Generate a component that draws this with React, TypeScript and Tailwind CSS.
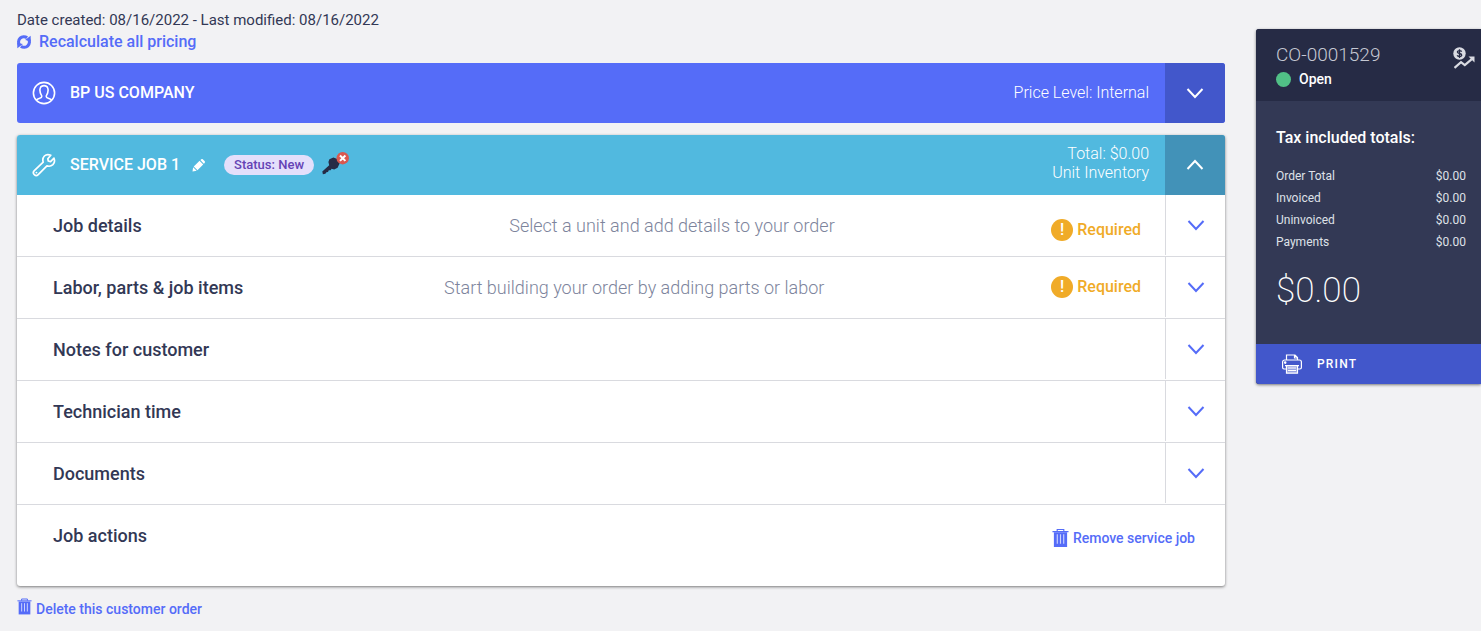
import React from "react";

type IconProps = { className?: string };

function RefreshIcon({ className }: IconProps) {
  return (
    <svg viewBox="0 0 16 16" className={className} fill="none" aria-hidden="true">
      <path d="M3 11.500A6 6 0 0 1 11.500 3.200" stroke="currentColor" strokeWidth="3.600" />
      <path d="M13 4.500A6 6 0 0 1 4.500 12.800" stroke="currentColor" strokeWidth="3.600" />
      <path d="M9.200 5.600 15.800 7 15.600.8Z" fill="currentColor" />
      <path d="M6.800 10.400.2 9 .4 15.200Z" fill="currentColor" />
    </svg>
  );
}

function UserIcon({ className }: IconProps) {
  return (
    <svg viewBox="0 0 24 24" className={className} fill="none" stroke="currentColor" strokeWidth="1.600" aria-hidden="true">
      <circle cx="12" cy="12" r="10.600" />
      <path d="M4.200 19.200c.7-1 2-1.600 3.600-2 1.400-.3 2-.8 2-1.900 0-1.200-1.100-2-1.500-3.600-.5-1.800-.7-3.400 0-4.900C8.900 5.300 10.200 4.600 12 4.600s3.100.7 3.700 2.200c.7 1.500.5 3.100 0 4.900-.4 1.600-1.500 2.400-1.500 3.600 0 1.100.6 1.600 2 1.900 1.600.4 2.900 1 3.600 2" />
    </svg>
  );
}

function WrenchIcon({ className }: IconProps) {
  return (
    <svg viewBox="0 0 24 24" className={className} fill="none" stroke="currentColor" strokeWidth="1.700" strokeLinejoin="round" strokeLinecap="round" aria-hidden="true">
      <path d="M18.800 2.200 15.800 5.800l.5 2.200 2.300.6L22 5.200c.9 2.400.4 5-1.100 6.500-1.600 1.500-3.800 1.900-6 1.200L6.200 21.600c-1.100 1.100-2.800 1.100-3.900 0s-1.100-2.800 0-3.900l8.900-8.500c-.7-2.300-.3-4.600 1.200-6.200 1.600-1.600 4-1.800 6.400-.8Z" />
      <path d="M4.400 19.600h.1" strokeWidth="1.800" />
    </svg>
  );
}

function PencilIcon({ className }: IconProps) {
  return (
    <svg viewBox="0 0 16 16" className={className} fill="currentColor" aria-hidden="true">
      <path d="M.6 15.400l.8-5.200 4.400 4.400Z" />
      <path d="M2.200 9.300 9.300 2.200l4.500 4.500-7.100 7.100Z" />
      <path d="M10.300 1.300 11.200.5c.7-.6 1.600-.6 2.300 0l2 2c.6.7.6 1.600 0 2.300l-.9.900Z" />
    </svg>
  );
}

function KeyMissingIcon({ className }: IconProps) {
  return (
    <svg viewBox="0 0 27 23" className={className} aria-label="Key not assigned" role="img">
      <path d="M6.400 10 7.400 7.200 11.400 5.600 16 7.200 17.600 11.600 15.600 15.800 12.200 17.600 9.600 16.800 8.600 18.200 6.800 18.200 6 20 4.400 20.200 3.400 21.800.9 22.200.3 19.600 7.200 13.200Z" fill="#262b45" />
      <circle cx="20.700" cy="6.200" r="6.200" fill="#d9584f" />
      <path d="M18 3.500l5.400 5.400M23.400 3.500l-5.400 5.400" stroke="#fff" strokeWidth="2" />
    </svg>
  );
}

function Chevron({ up = false, className }: IconProps & { up?: boolean }) {
  return (
    <svg viewBox="0 0 18 12" className={className} fill="none" stroke="currentColor" strokeWidth="2" aria-hidden="true">
      <path d={up ? "M1.500 10 9 2l7.500 8" : "M1.500 2 9 10l7.500-8"} />
    </svg>
  );
}

function TrashIcon({ className }: IconProps) {
  return (
    <svg viewBox="0 0 18 20" className={className} fill="none" aria-hidden="true">
      <path d="M.5 3.200h17" stroke="currentColor" strokeWidth="1.200" />
      <path d="M5.500 3V1h7v2" stroke="currentColor" strokeWidth="1.200" />
      <path d="M2 4h14v15.500H2Z" fill="currentColor" />
      <path d="M5.600 6v10M9 6v10M12.400 6v10" stroke="#fff" strokeOpacity=".7" strokeWidth="1.200" />
    </svg>
  );
}

function PrinterIcon({ className }: IconProps) {
  return (
    <svg viewBox="0 0 20 20" className={className} fill="none" stroke="currentColor" strokeWidth="1.200" aria-hidden="true">
      <path d="M4.500 6V1h8.500l2.500 2.500V6M12.500 1v3h3" />
      <path d="M4 15H2a1.400 1.400 0 0 1-1.400-1.400V8A2 2 0 0 1 2.600 6h14.800a2 2 0 0 1 2 2v5.600A1.400 1.400 0 0 1 18 15h-2" />
      <path d="M4.500 11.500h11v7.700h-11Z" fill="currentColor" fillOpacity=".45" />
      <path d="M3 11.600h14M6 14h8M6 16.500h8" />
      <circle cx="3.200" cy="8.600" r=".7" fill="currentColor" />
    </svg>
  );
}

function ProfitIcon({ className }: IconProps) {
  return (
    <svg viewBox="0 0 22 22" className={className} aria-hidden="true">
      <circle cx="6.500" cy="6.500" r="6.200" fill="#d9dbe2" />
      <path
        d="M8.700 4.600C8.200 3.900 7.400 3.700 6.500 3.700c-1.200 0-2.100.5-2.100 1.400 0 1.900 4.300.9 4.300 2.900 0 1-1 1.500-2.200 1.500-1 0-1.900-.3-2.400-1.100M6.500 2.200v8.800"
        fill="none"
        stroke="#262b45"
        strokeWidth="1.300"
      />
      <path d="M1.500 20.800 8 15.200l3.800 3 7-6" fill="none" stroke="#d9dbe2" strokeWidth="2.200" />
      <path d="M15.500 9.500h6v6Z" fill="#d9dbe2" />
    </svg>
  );
}

type Row = { title: string; hint?: string; hintClass?: string; requiredClass?: string };

const rows: Row[] = [
  { title: "Job details", hint: "Select a unit and add details to your order", hintClass: "pl-[151px]", requiredClass: "pt-2" },
  { title: "Labor, parts & job items", hint: "Start building your order by adding parts or labor", hintClass: "pr-[26px]", requiredClass: "pb-px" },
  { title: "Notes for customer" },
  { title: "Technician time" },
  { title: "Documents" },
];

const totals = [
  ["Order Total", "$0.00"],
  ["Invoiced", "$0.00"],
  ["Uninvoiced", "$0.00"],
  ["Payments", "$0.00"],
];

export default function App() {
  return (
    <div className="flex min-h-screen items-start gap-[31px] bg-[#f2f2f4] pl-[17px] font-['Roboto',sans-serif] text-[#323855]">
      <main className="min-w-0 flex-1 pt-[9px]">
        <p className="text-[15px] leading-[22px]">Date created: 08/16/2022 - Last modified: 08/16/2022</p>
        <button type="button" className="flex items-center gap-2 text-base leading-[22px] font-medium text-[#556cf8]">
          <RefreshIcon className="size-[14px]" />
          Recalculate all pricing
        </button>

        <section className="mt-[10px] flex h-[60px] overflow-hidden rounded-[3px] bg-[#556cf8] text-white">
          <div className="flex flex-1 items-center pr-4 pl-[15px]">
            <UserIcon className="size-6" />
            <h2 className="ml-[14px] text-base font-medium">BP US COMPANY</h2>
            <span className="ml-auto text-base font-light">Price Level: Internal</span>
          </div>
          <button type="button" aria-label="Expand company" className="flex w-[60px] items-center justify-center bg-[#4257cb]">
            <Chevron className="h-3 w-[18px]" />
          </button>
        </section>

        <section className="mt-3 overflow-hidden rounded-[3px] bg-white shadow-[0_1px_3px_rgba(0,0,0,0.5)]">
          <div className="flex h-[60px] bg-[#51b9df] text-white">
            <div className="flex flex-1 items-center pr-4 pl-[15px]">
              <WrenchIcon className="size-6" />
              <h2 className="ml-[14px] text-base font-medium">SERVICE JOB 1</h2>
              <button type="button" aria-label="Rename job" className="ml-3">
                <PencilIcon className="size-[13px]" />
              </button>
              <span className="ml-[19px] flex h-5 w-[90px] items-center justify-center rounded-full bg-[#e4dffb] text-[13px] font-medium text-[#6543b5]">
                Status: New
              </span>
              <KeyMissingIcon className="mb-1 ml-2 h-[23px] w-[27px]" />
              <div className="ml-auto pb-1 text-right text-base leading-[19px] font-light">
                <div>Total: $0.00</div>
                <div>Unit Inventory</div>
              </div>
            </div>
            <button type="button" aria-label="Collapse service job" className="flex w-[60px] items-center justify-center bg-[#4292b8]">
              <Chevron up className="h-3 w-[18px]" />
            </button>
          </div>

          {rows.map((row) => (
            <div key={row.title} className="flex h-[62px] border-b border-[#d9dadf]">
              <div className="flex flex-1 items-center pr-6 pl-9">
                <h3 className="text-lg font-medium">{row.title}</h3>
                {row.hint && (
                  <>
                    <p className={`flex-1 text-center text-lg font-light text-[#7d849c] ${row.hintClass}`}>{row.hint}</p>
                    <span className={`flex items-center gap-1 text-base font-medium text-[#f0ab28] ${row.requiredClass}`}>
                      <span className="flex size-[22px] items-center justify-center rounded-full bg-[#f0ab28] text-base text-white">!</span>
                      Required
                    </span>
                  </>
                )}
              </div>
              <button
                type="button"
                aria-label={`Expand ${row.title}`}
                className="mb-px flex w-[60px] items-center justify-center border-l border-[#d9dadf] text-[#556cf8]"
              >
                <Chevron className="h-3 w-[18px]" />
              </button>
            </div>
          ))}

          <div className="flex h-[81px] items-start justify-between pt-[18px] pr-[30px] pl-9">
            <h3 className="text-lg leading-[26px] font-medium">Job actions</h3>
            <button type="button" className="flex items-center gap-1 pt-[5px] text-sm leading-5 font-medium text-[#556cf8]">
              <TrashIcon className="h-5 w-[17px]" />
              Remove service job
            </button>
          </div>
        </section>

        <button type="button" className="mt-3 flex items-start gap-1 text-sm leading-[22px] font-medium text-[#556cf8]">
          <TrashIcon className="h-[17px] w-[15px]" />
          Delete this customer order
        </button>
      </main>

      <aside className="mt-[29px] w-[225px] shrink-0 overflow-hidden rounded-l-[3px] bg-[#333955] text-white shadow-[0_1px_3px_rgba(0,0,0,0.5)]">
        <header className="flex h-[72px] items-start justify-between bg-[#262b45] pt-[14px] pr-[6px] pl-5">
          <div>
            <h1 className="text-[19px] leading-6 font-light text-[#c5c8d3]">CO-0001529</h1>
            <p className="mt-px flex items-center gap-2 text-sm leading-[22px] font-medium">
              <span className="size-[15px] rounded-full bg-[#51c086]" />
              Open
            </p>
          </div>
          <button type="button" aria-label="View profit" className="mt-1">
            <ProfitIcon className="size-[22px]" />
          </button>
        </header>
        <div className="h-[243px] pt-[25px] pr-[15px] pl-5">
          <h2 className="text-base leading-6 font-medium">Tax included totals:</h2>
          <dl className="mt-[15px] text-xs leading-[22px] text-[#dfe1e8]">
            {totals.map(([label, value]) => (
              <div key={label} className="flex justify-between">
                <dt>{label}</dt>
                <dd>{value}</dd>
              </div>
            ))}
          </dl>
          <p className="mt-[17px] text-[35px] leading-[42px] font-extralight">$0.00</p>
        </div>
        <button type="button" className="flex h-10 w-full items-center gap-[15px] bg-[#4257cb] pl-[26px] text-xs font-medium tracking-widest">
          <PrinterIcon className="size-5" />
          PRINT
        </button>
      </aside>
    </div>
  );
}
